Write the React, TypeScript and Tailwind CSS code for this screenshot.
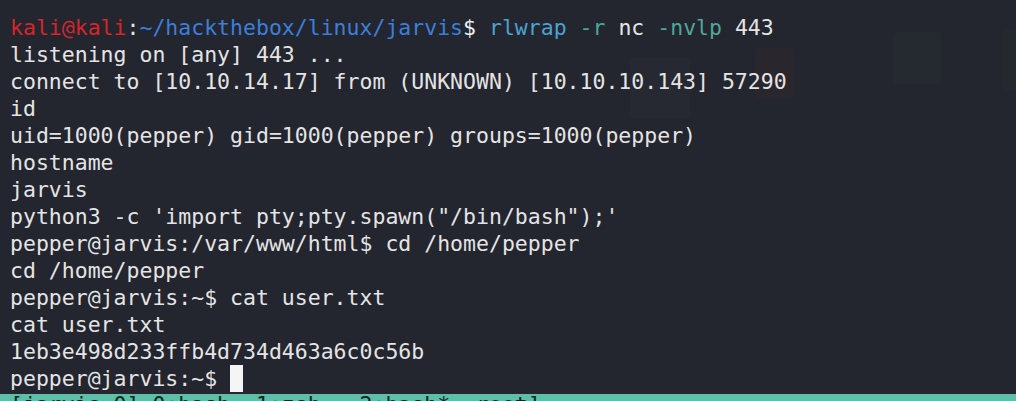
import React from "react";

const mono = { fontFamily: '"DejaVu Sans Mono", "Liberation Mono", monospace' };

function Line({ children }: { children: React.ReactNode }) {
  return <div className="h-[27px] leading-[27px] whitespace-pre">{children}</div>;
}

export default function App() {
  return (
    <div
      className="relative w-[1016px] h-[401px] overflow-hidden bg-[#23252f] text-[#e4e4e4] text-[21.5px] flex flex-col"
      style={mono}
    >
      {/* faint desktop icons showing through the translucent terminal */}
      <div className="absolute left-[630px] top-[58px] w-[60px] h-[60px] rounded bg-[#272932]" />
      <div className="absolute left-[755px] top-[48px] w-[40px] h-[50px] rounded bg-[#29262e]" />
      <div className="absolute left-[893px] top-[32px] w-[48px] h-[52px] rounded bg-[#252930]" />
      <div className="absolute left-[1002px] top-[30px] w-[20px] h-[60px] rounded bg-[#24292e]" />

      <div className="relative flex flex-col pt-[14px] pl-[10px]">
        <Line>
          <span className="text-[#d4262b]">kali@kali</span>
          <span className="text-[#e4e4e4]">:</span>
          <span className="text-[#3c7fd8]">~/hackthebox/linux/jarvis</span>
          <span className="text-[#f0f0f0]">$ </span>
          <span className="text-[#4ba3cf]">rlwrap</span>
          <span> </span>
          <span className="text-[#4fa79a]">-r</span>
          <span> nc </span>
          <span className="text-[#4fa79a]">-nvlp</span>
          <span> 443</span>
        </Line>
        <Line>listening on [any] 443 ...</Line>
        <Line>connect to [10.10.14.17] from (UNKNOWN) [10.10.10.143] 57290</Line>
        <Line>id</Line>
        <Line>uid=1000(pepper) gid=1000(pepper) groups=1000(pepper)</Line>
        <Line>hostname</Line>
        <Line>jarvis</Line>
        <Line>python3 -c 'import pty;pty.spawn("/bin/bash");'</Line>
        <Line>pepper@jarvis:/var/www/html$ cd /home/pepper</Line>
        <Line>cd /home/pepper</Line>
        <Line>pepper@jarvis:~$ cat user.txt</Line>
        <Line>cat user.txt</Line>
        <Line>1eb3e498d233ffb4d734d463a6c0c56b</Line>
        <Line>
          <span>pepper@jarvis:~$ </span>
          <span className="inline-block align-top w-[13px] h-[27px] bg-[#f5f5f5]" />
        </Line>
      </div>

      <div className="relative flex-1 mt-[2px] bg-[#5dbfa8] overflow-hidden pl-[10px]">
        <div className="whitespace-pre leading-[27px] text-[#13261f] mt-[-3px]">
          [jarvis 0] 0:bash  1:zsh-  2:bash*  root]
        </div>
      </div>
    </div>
  );
}
